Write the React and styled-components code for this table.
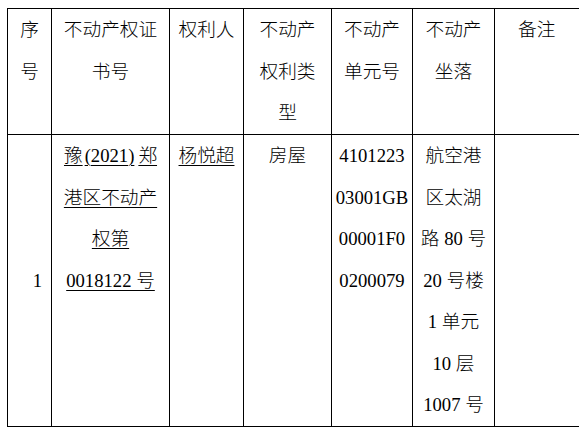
import React from 'react';
import styled, { createGlobalStyle } from 'styled-components';

const GlobalStyle = createGlobalStyle`
  html, body {
    margin: 0;
    padding: 0;
    background: #ffffff;
    overflow: hidden;
  }
`;

const Page = styled.div`
  width: 579px;
  height: 434px;
  overflow: hidden;
  padding: 8px 0 0 7px;
  box-sizing: border-box;
`;

const Table = styled.table`
  border-collapse: collapse;
  table-layout: fixed;
  width: 588px;
  font-family: 'Liberation Serif', 'Noto Sans CJK SC', serif;
  font-size: 18.67px;
  font-weight: 300;
  line-height: 41.5px;
  color: #000000;
`;

const HeadRow = styled.tr`
  height: 126px;
`;

const BodyRow = styled.tr`
  height: 292px;
`;

const Cell = styled.td`
  border: 1px solid #000000;
  padding: 0 2px;
  vertical-align: ${props => props.$valign || 'top'};
  text-align: ${props => props.$align || 'center'};
  padding-right: ${props => props.$padRight || '2px'};
  white-space: nowrap;
`;

const Underlined = styled.span`
  text-decoration: underline;
  text-underline-offset: 3px;
  text-decoration-thickness: 1px;
`;

const Paren = styled.span`
  margin: 0 ${props => props.$after || '0'} 0 ${props => props.$before || '0'};
`;

const columns = [44, 118, 74, 88, 81, 82, 101];

const lines = items =>
  items.map((item, i) => (
    <React.Fragment key={i}>
      {i > 0 && <br />}
      {item}
    </React.Fragment>
  ));

const App = () => (
  <>
    <GlobalStyle />
    <Page>
      <Table>
        <colgroup>
          {columns.map((w, i) => (
            <col key={i} style={{ width: `${w}px` }} />
          ))}
        </colgroup>
        <tbody>
          <HeadRow>
            <Cell>{lines(['序', '号'])}</Cell>
            <Cell>{lines(['不动产权证', '书号'])}</Cell>
            <Cell>权利人</Cell>
            <Cell>{lines(['不动产', '权利类', '型'])}</Cell>
            <Cell>{lines(['不动产', '单元号'])}</Cell>
            <Cell>{lines(['不动产', '坐落'])}</Cell>
            <Cell $align="left">
              <span style={{ paddingLeft: '21px' }}>备注</span>
            </Cell>
          </HeadRow>
          <BodyRow>
            <Cell $valign="middle" $align="right" $padRight="9px">
              1
            </Cell>
            <Cell>
              {lines([
                <Underlined key="a">
                  豫<Paren $before="2px">(</Paren>2021<Paren $after="4px">)</Paren>郑
                </Underlined>,
                <Underlined key="b">港区不动产</Underlined>,
                <Underlined key="c">权第</Underlined>,
                <Underlined key="d">0018122 号</Underlined>,
              ])}
            </Cell>
            <Cell>
              <Underlined>杨悦超</Underlined>
            </Cell>
            <Cell>房屋</Cell>
            <Cell>{lines(['4101223', '03001GB', '00001F0', '0200079'])}</Cell>
            <Cell>
              {lines([
                '航空港',
                '区太湖',
                '路 80 号',
                '20 号楼',
                '1 单元',
                '10 层',
                '1007 号',
              ])}
            </Cell>
            <Cell />
          </BodyRow>
        </tbody>
      </Table>
    </Page>
  </>
);

export default App;
